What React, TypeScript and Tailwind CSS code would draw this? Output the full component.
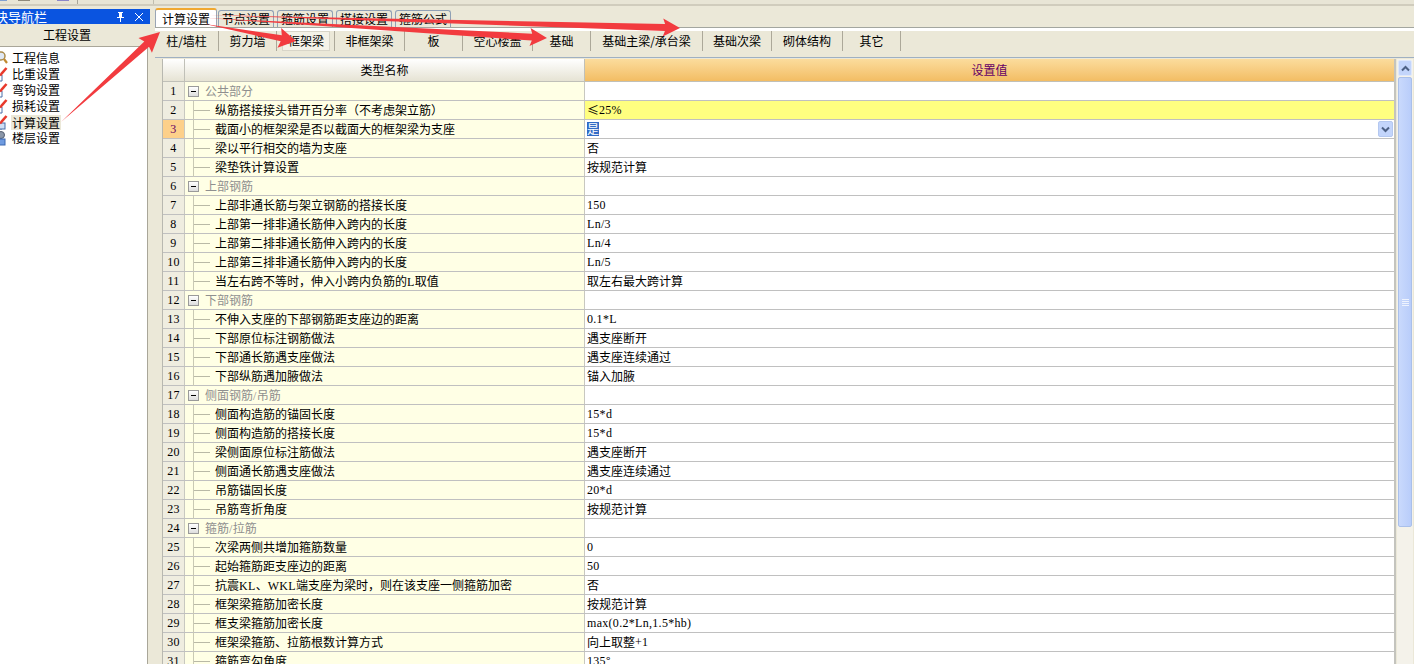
const CJK = "font-['Noto_Sans_CJK_SC','Liberation_Sans',sans-serif]";

function Mixed({ text }: { text: string }) {
  const parts = text.split(/([\x21-\x7e]+)/);
  return (
    <>
      {parts.map((p, i) =>
        /^[\x21-\x7e]+$/.test(p) ? (
          <span key={i} className="font-['Liberation_Serif',serif] text-[12px] tracking-[0.3px]">{p}</span>
        ) : (
          <span key={i}>{p}</span>
        ),
      )}
    </>
  );
}

type Row = { label: string; value?: string; group?: boolean };

const rows: Row[] = [
  { label: "公共部分", group: true },
  { label: "纵筋搭接接头错开百分率（不考虑架立筋）", value: "≤25%" },
  { label: "截面小的框架梁是否以截面大的框架梁为支座", value: "是" },
  { label: "梁以平行相交的墙为支座", value: "否" },
  { label: "梁垫铁计算设置", value: "按规范计算" },
  { label: "上部钢筋", group: true },
  { label: "上部非通长筋与架立钢筋的搭接长度", value: "150" },
  { label: "上部第一排非通长筋伸入跨内的长度", value: "Ln/3" },
  { label: "上部第二排非通长筋伸入跨内的长度", value: "Ln/4" },
  { label: "上部第三排非通长筋伸入跨内的长度", value: "Ln/5" },
  { label: "当左右跨不等时，伸入小跨内负筋的L取值", value: "取左右最大跨计算" },
  { label: "下部钢筋", group: true },
  { label: "不伸入支座的下部钢筋距支座边的距离", value: "0.1*L" },
  { label: "下部原位标注钢筋做法", value: "遇支座断开" },
  { label: "下部通长筋遇支座做法", value: "遇支座连续通过" },
  { label: "下部纵筋遇加腋做法", value: "锚入加腋" },
  { label: "侧面钢筋/吊筋", group: true },
  { label: "侧面构造筋的锚固长度", value: "15*d" },
  { label: "侧面构造筋的搭接长度", value: "15*d" },
  { label: "梁侧面原位标注筋做法", value: "遇支座断开" },
  { label: "侧面通长筋遇支座做法", value: "遇支座连续通过" },
  { label: "吊筋锚固长度", value: "20*d" },
  { label: "吊筋弯折角度", value: "按规范计算" },
  { label: "箍筋/拉筋", group: true },
  { label: "次梁两侧共增加箍筋数量", value: "0" },
  { label: "起始箍筋距支座边的距离", value: "50" },
  { label: "抗震KL、WKL端支座为梁时，则在该支座一侧箍筋加密", value: "否" },
  { label: "框架梁箍筋加密长度", value: "按规范计算" },
  { label: "框支梁箍筋加密长度", value: "max(0.2*Ln,1.5*hb)" },
  { label: "框架梁箍筋、拉筋根数计算方式", value: "向上取整+1" },
  { label: "箍筋弯勾角度", value: "135°" },
];

const navItems = ["工程信息", "比重设置", "弯钩设置", "损耗设置", "计算设置", "楼层设置"];
const topTabs = ["计算设置", "节点设置", "箍筋设置", "搭接设置", "箍筋公式"];
const subTabs: [string, string][] = [
  ["柱/墙柱", "w-[64px]"],
  ["剪力墙", "w-[58px]"],
  ["框架梁", "w-[58px]"],
  ["非框架梁", "w-[70px]"],
  ["板", "w-[58px]"],
  ["空心楼盖", "w-[70px]"],
  ["基础", "w-[58px]"],
  ["基础主梁/承台梁", "w-[112px]"],
  ["基础次梁", "w-[69px]"],
  ["砌体结构", "w-[71px]"],
  ["其它", "w-[58px]"],
];

function NavIcon({ i }: { i: number }) {
  return (
    <svg width="8" height="16" viewBox="0 0 8 16" className="shrink-0">
      {i === 0 ? (
        <>
          <circle cx="1" cy="6" r="4" fill="#dfe8f5" stroke="#a98a4a" strokeWidth="1.5" />
          <path d="M4 9l3 4" stroke="#c08a30" strokeWidth="2.2" />
        </>
      ) : i === 5 ? (
        <>
          <circle cx="1" cy="5" r="3.5" fill="#8a96a8" stroke="#555f70" />
          <rect x="-2" y="9" width="7" height="6" fill="#6f9be0" stroke="#3a66b0" />
        </>
      ) : (
        <>
          <path d="M0 9h2v6H0" fill={i === 4 ? "#cfdff5" : "#fff"} stroke="#4a6ea8" />
          {i === 4 && <rect x="-3" y="9" width="8" height="6" fill="#cfdff5" stroke="#4a6ea8" />}
          <path d="M0 9.5L6.5 2" stroke="#e8392c" strokeWidth="2.6" />
        </>
      )}
    </svg>
  );
}

function Arrow({ x1, y1, x2, y2, w = 3, head = 16, wing = 7 }: { x1: number; y1: number; x2: number; y2: number; w?: number; head?: number; wing?: number }) {
  const dx = x2 - x1;
  const dy = y2 - y1;
  const len = Math.hypot(dx, dy);
  const ux = dx / len;
  const uy = dy / len;
  const nx = -uy;
  const ny = ux;
  const bx = x2 - ux * head;
  const by = y2 - uy * head;
  const nb = bx + ux * 2;
  const mb = by + uy * 2;
  const pts = [
    [x1, y1],
    [nb + (nx * w) / 2, mb + (ny * w) / 2],
    [bx + nx * wing, by + ny * wing],
    [x2, y2],
    [bx - nx * wing, by - ny * wing],
    [nb - (nx * w) / 2, mb - (ny * w) / 2],
  ];
  return <polygon points={pts.map((p) => p.join(",")).join(" ")} fill="#f23b3f" />;
}

export default function App() {
  return (
    <div className={`relative w-[1414px] h-[664px] overflow-hidden bg-[#ebe8d8] text-[12px] text-black ${CJK}`}>
      <div className="h-[6px] bg-[#e8e5d6] border-b-2 border-[#d0ccbd] flex items-start">
        <span className="w-[7px] h-[1px] bg-[#7f9fd0]" />
        <span className="ml-[11px] w-[12px] h-[1px] bg-[#8f897a]" />
        <span className="ml-[27px] w-[12px] h-[1px] bg-[#8b86c8]" />
        <span className="ml-[8px] w-[1px] h-[4px] bg-[#a8a598]" />
        <span className="ml-[75px] w-[1px] h-[4px] bg-[#c0bdae]" />
      </div>
      <div className="flex h-[658px]">
        {/* left nav */}
        <div className="w-[150px] shrink-0 pt-[3px] flex flex-col">
          <div className="h-[15px] bg-[#0a54e0] text-white text-[13px] leading-[15px] flex items-center shrink-0">
            <span className="ml-[-5px] whitespace-nowrap">快导航栏</span>
            <span className="ml-auto mr-[7px] flex items-center gap-[10px]">
              <svg width="9" height="10" viewBox="0 0 9 10"><path d="M2 0h5v1H6v4h2v1H5v4H4V6H1V5h2V1H2z" fill="#fff" /></svg>
              <svg width="8" height="8" viewBox="0 0 8 8"><path d="M0 0l8 8M8 0L0 8" stroke="#fff" strokeWidth="1" /></svg>
            </span>
          </div>
          <div className="h-[22px] shrink-0 bg-[#ebe8d8] flex items-center justify-center pr-[16px] text-[12px]">工程设置</div>
          <div className="flex-1 mr-[2px] bg-white border-t border-t-[#a9a699] border-r border-r-[#a9a699] pt-[3px]">
            {navItems.map((t, i) => (
              <div key={t} className="h-[16px] flex items-center gap-[3px] leading-[16px]">
                <NavIcon i={i} />
                <span className={i === 4 ? "bg-[#ebe8d8] px-[1px] h-[15px] leading-[15px]" : "px-[1px]"}>{t}</span>
              </div>
            ))}
          </div>
        </div>
        {/* right */}
        <div className="flex-1 min-w-0 flex flex-col pl-[5px] pt-[2px]">
          <div className="h-[19px] flex items-end shrink-0">
            {topTabs.map((t, i) => (
              <div
                key={t}
                className={
                  i === 0
                    ? "w-[62px] mr-[1px] h-[19px] bg-white border-t-2 border-x border-t-[#f0a830] border-x-[#9aa5b5] rounded-t-[3px] flex items-center justify-center"
                    : "w-[56px] mr-[3px] h-[17px] bg-[#ebe8d8] border border-b-0 border-[#8fa0b5] rounded-t-[3px] flex items-center justify-center leading-[14px]"
                }
              >
                {t}
              </div>
            ))}
          </div>
          <div className="h-[1px] bg-[#a3a69f] shrink-0" />
          <div className="h-[3px] bg-white shrink-0" />
          <div className="h-[20px] flex items-stretch shrink-0">
            {subTabs.map(([t, w]) => (
              <div
                key={t}
                className={`${w} shrink-0 flex items-center border-r border-[#aca899] ${t === "框架梁" ? "justify-start pl-[5px]" : "justify-center"}`}
              >
                {t === "框架梁" ? (
                  <span className="w-[48px] h-[20px] flex items-center justify-center bg-[#f4f2e8] border border-[#d8d5c8]">{t}</span>
                ) : (
                  t
                )}
              </div>
            ))}
          </div>
          <div className="h-[7px] shrink-0 border-b border-[#9fb0c2]" />
          {/* grid + scrollbar */}
          <div className="flex flex-1 min-h-0 ml-[7px] pt-[1px]">
            <div className="w-[1234px] shrink-0 border-l border-[#b8b8b0] border-r-2 border-r-[#c4c4be] flex flex-col overflow-hidden">
              <div className="h-[23px] flex shrink-0 border-b border-[#c0c0b8]">
                <div className="w-[22px] shrink-0 bg-gradient-to-b from-white to-[#e6e3d4] border-r border-[#c0c0b8]" />
                <div className="w-[400px] shrink-0 bg-gradient-to-b from-white to-[#e6e3d4] border-r border-[#c0c0b8] flex items-center justify-center">类型名称</div>
                <div className="flex-1 bg-gradient-to-b from-[#fbdc9c] to-[#f3bd63] flex items-center justify-center text-[#660066]">设置值</div>
              </div>
              {rows.map((r, i) => {
                const n = i + 1;
                const active = n === 3;
                return (
                  <div key={n} className="h-[19px] shrink-0 flex border-b border-[#c0c0c0]">
                    <div className={`w-[22px] shrink-0 border-r border-[#c8c8c0] flex items-center justify-center font-['Liberation_Serif',serif] text-[12px] tracking-[0.3px] ${active ? "bg-[#fdd08a] text-[#660066]" : "bg-[#efede0]"}`}>{n}</div>
                    <div className="w-[400px] shrink-0 bg-[#ffffe5] border-r border-[#c8c8c0] flex items-center whitespace-nowrap">
                      {r.group ? (
                        <>
                          <span className="ml-[3px] w-[11px] h-[11px] border border-[#9a9a9a] bg-gradient-to-b from-white to-[#dddddd] flex items-center justify-center shrink-0">
                            <span className="w-[5px] h-[1px] bg-black" />
                          </span>
                          <span className="ml-[6px] text-[#8f8f8f]"><Mixed text={r.label} /></span>
                        </>
                      ) : (
                        <>
                          <span className="ml-[8px] w-[1px] h-[19px] bg-[#c9c9b4] shrink-0" />
                          <span className="w-[16px] h-[1px] bg-[#b9b9a6] shrink-0" />
                          <span className="ml-[5px]"><Mixed text={r.label} /></span>
                        </>
                      )}
                    </div>
                    <div className={`flex-1 flex items-center pl-[2px] whitespace-nowrap relative ${n === 2 ? "bg-[#ffff80]" : "bg-white"}`}>
                      {active ? (
                        <>
                          <span className="bg-[#316ac5] text-white h-[14px] leading-[14px]">是</span>
                          <span className="absolute right-[1px] top-[1px] w-[15px] h-[16px] rounded-[2px] bg-[#c3d5fb] border border-[#b4c8f0] flex items-center justify-center">
                            <svg width="9" height="7" viewBox="0 0 9 7"><path d="M1 1.5l3.5 3.5L8 1.5" fill="none" stroke="#4d6185" strokeWidth="2" /></svg>
                          </span>
                        </>
                      ) : r.value ? (
                        <Mixed text={r.value} />
                      ) : null}
                    </div>
                  </div>
                );
              })}
            </div>
            {/* scrollbar */}
            <div className="w-[16px] ml-[1px] shrink-0 flex flex-col pt-[1px] bg-[#f4f2ea]">
              <div className="h-[16px] mx-[1px] shrink-0 rounded-[2px] bg-[#c3d5fb] border border-[#dfe8fb] flex items-center justify-center">
                <svg width="9" height="7" viewBox="0 0 9 7"><path d="M1 5.5L4.5 2 8 5.5" fill="none" stroke="#4d6185" strokeWidth="2" /></svg>
              </div>
              <div className="h-[450px] mt-[1px] mx-[1px] shrink-0 rounded-[2px] bg-gradient-to-r from-[#c9d9fc] to-[#b9cdfa] border border-[#aac0ea] flex items-center justify-center">
                <span className="flex flex-col gap-[1px] w-[7px]">
                  <span className="h-[1px] bg-[#eef3fe]" />
                  <span className="h-[1px] bg-[#eef3fe]" />
                  <span className="h-[1px] bg-[#eef3fe]" />
                  <span className="h-[1px] bg-[#eef3fe]" />
                </span>
              </div>
            </div>
          </div>
        </div>
      </div>
      {/* red annotation arrows */}
      <svg className="absolute inset-0 pointer-events-none" width="1414" height="664">
        <Arrow x1={61} y1={122} x2={160} y2={32} w={7} head={20} wing={10} />
        <Arrow x1={205} y1={24} x2={296} y2={41} w={6} head={17} wing={10} />
        <Arrow x1={206} y1={18} x2={547} y2={38} w={7} head={17} wing={9} />
        <Arrow x1={210} y1={15} x2={680} y2={28} w={7} head={17} wing={9} />
      </svg>
    </div>
  );
}
